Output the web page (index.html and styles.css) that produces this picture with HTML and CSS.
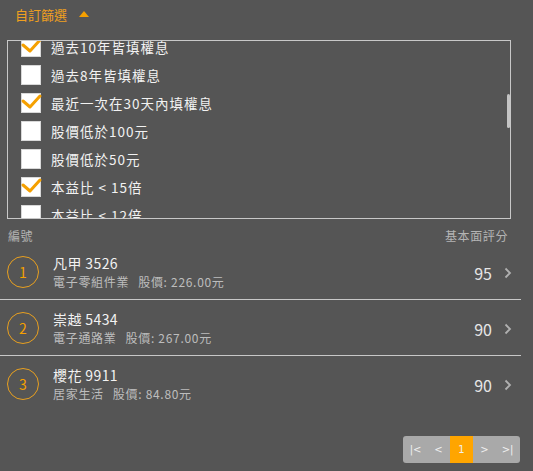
FILE: index.html
```html
<!DOCTYPE html>
<html lang="zh-Hant">
<head>
<meta charset="utf-8">
<link rel="stylesheet" href="styles.css">
</head>
<body>
<div class="page">
  <div class="filter-head">
    <span class="filter-title">自訂篩選</span>
    <span class="caret-up"></span>
  </div>
  <div class="filter-box">
    <ul class="filter-list">
      <li class="opt"><span class="cb on"><svg viewBox="0 0 20 20"><polyline points="2,8 9,14 19,3"/></svg></span><span class="opt-label">過去10年皆填權息</span></li>
      <li class="opt"><span class="cb"></span><span class="opt-label">過去8年皆填權息</span></li>
      <li class="opt"><span class="cb on"><svg viewBox="0 0 20 20"><polyline points="2,8 9,14 19,3"/></svg></span><span class="opt-label">最近一次在30天內填權息</span></li>
      <li class="opt"><span class="cb"></span><span class="opt-label">股價低於100元</span></li>
      <li class="opt"><span class="cb"></span><span class="opt-label">股價低於50元</span></li>
      <li class="opt"><span class="cb on"><svg viewBox="0 0 20 20"><polyline points="2,8 9,14 19,3"/></svg></span><span class="opt-label">本益比 &lt; 15倍</span></li>
      <li class="opt"><span class="cb"></span><span class="opt-label">本益比 &lt; 12倍</span></li>
    </ul>
    <span class="thumb"></span>
  </div>
  <div class="list-head">
    <span>編號</span>
    <span>基本面評分</span>
  </div>
  <ul class="stocks">
    <li class="stock">
      <span class="rank">1</span>
      <div class="info">
        <div class="name">凡甲 3526</div>
        <div class="sub"><span class="ind">電子零組件業</span>股價: 226.00元</div>
      </div>
      <span class="score">95</span>
      <svg class="chev" viewBox="0 0 8 12"><polyline points="1.5,1.5 6,6 1.5,10.5"/></svg>
    </li>
    <li class="stock">
      <span class="rank">2</span>
      <div class="info">
        <div class="name">崇越 5434</div>
        <div class="sub"><span class="ind">電子通路業</span>股價: 267.00元</div>
      </div>
      <span class="score">90</span>
      <svg class="chev" viewBox="0 0 8 12"><polyline points="1.5,1.5 6,6 1.5,10.5"/></svg>
    </li>
    <li class="stock">
      <span class="rank">3</span>
      <div class="info">
        <div class="name">櫻花 9911</div>
        <div class="sub"><span class="ind">居家生活</span>股價: 84.80元</div>
      </div>
      <span class="score">90</span>
      <svg class="chev" viewBox="0 0 8 12"><polyline points="1.5,1.5 6,6 1.5,10.5"/></svg>
    </li>
  </ul>
  <div class="pager-row">
    <div class="pager">
      <span class="pg">|&lt;</span>
      <span class="pg">&lt;</span>
      <span class="pg active">1</span>
      <span class="pg">&gt;</span>
      <span class="pg">&gt;|</span>
    </div>
  </div>
</div>
</body>
</html>
```
FILE: styles.css
```css
html, body {
  margin: 0;
  padding: 0;
  background: #555555;
}
body {
  font-family: "Noto Sans CJK TC", "Noto Sans", sans-serif;
  color: #eeeeee;
}
.page {
  width: 533px;
  height: 471px;
  overflow: hidden;
}
.filter-head {
  display: flex;
  align-items: center;
  height: 30px;
  padding-left: 15px;
  gap: 12px;
}
.filter-title {
  color: #f0a020;
  font-size: 13px;
  line-height: 30px;
}
.caret-up {
  width: 0;
  height: 0;
  border-left: 5.5px solid transparent;
  border-right: 5.5px solid transparent;
  border-bottom: 6px solid #f5a000;
  margin-top: -2px;
}
.filter-box {
  position: relative;
  margin: 10px 22px 0 7px;
  height: 177px;
  border: 1px solid #c8c8c8;
  overflow: hidden;
}
.filter-list {
  list-style: none;
  margin: -8px 0 0 0;
  padding: 0 0 0 13px;
}
.opt {
  display: flex;
  align-items: center;
  height: 28px;
  gap: 10px;
}
.cb {
  width: 20px;
  height: 20px;
  box-sizing: border-box;
  background: #ffffff;
  border: 1px solid #d8d8d8;
  display: flex;
}
.cb svg {
  width: 20px;
  height: 20px;
  margin: -1px;
  overflow: visible;
}
.cb polyline {
  fill: none;
  stroke: #f5a000;
  stroke-width: 3;
  stroke-linecap: round;
  stroke-linejoin: round;
}
.opt-label {
  font-size: 13.5px;
  letter-spacing: 1px;
  color: #f2f2f2;
}
.thumb {
  position: absolute;
  right: 0;
  top: 53px;
  width: 3px;
  height: 34px;
  background: #c4c4c4;
  border-radius: 2px;
}
.list-head {
  display: flex;
  justify-content: space-between;
  margin-top: 9px;
  height: 16px;
  line-height: 16px;
  padding: 0 25px 0 8px;
  font-size: 12px;
  letter-spacing: 0.6px;
  color: #b4b4b4;
}
.stocks {
  list-style: none;
  margin: 0;
  padding: 0;
  width: 521px;
}
.stock {
  display: flex;
  align-items: center;
  height: 55px;
  border-bottom: 1px solid #c8c8c8;
  padding: 0 9px 0 7px;
}
.stock:last-child {
  border-bottom: none;
}
.rank {
  width: 32px;
  height: 32px;
  box-sizing: border-box;
  border: 1.5px solid #e8a020;
  border-radius: 50%;
  display: flex;
  align-items: center;
  justify-content: center;
  color: #f5a000;
  font-size: 14px;
}
.info {
  flex: 1;
  margin-left: 14px;
  margin-top: 1px;
}
.name {
  font-size: 14px;
  line-height: 19px;
  letter-spacing: 0.4px;
  color: #f2f2f2;
}
.sub {
  font-size: 12px;
  line-height: 17px;
  letter-spacing: 0.7px;
  color: #bdbdbd;
}
.ind {
  margin-right: 9px;
}
.score {
  font-size: 16px;
  color: #e6e6e6;
  margin-right: 12px;
  margin-top: 2px;
}
.chev {
  width: 8px;
  height: 12px;
  margin-top: 2px;
}
.chev polyline {
  fill: none;
  stroke: #b0b0b0;
  stroke-width: 1.8;
}
.pager-row {
  display: flex;
  justify-content: flex-end;
  padding-right: 13px;
  margin-top: 25px;
}
.pager {
  display: flex;
  background: #a9a9a9;
  border-radius: 3px;
  padding: 0 1px 0 1px;
  height: 27px;
}
.pg {
  width: 23px;
  display: flex;
  align-items: center;
  justify-content: center;
  font-size: 10px;
  color: #f0f0f0;
  font-family: "DejaVu Sans", sans-serif;
}
.pg.active {
  background: #ffa500;
}
```
